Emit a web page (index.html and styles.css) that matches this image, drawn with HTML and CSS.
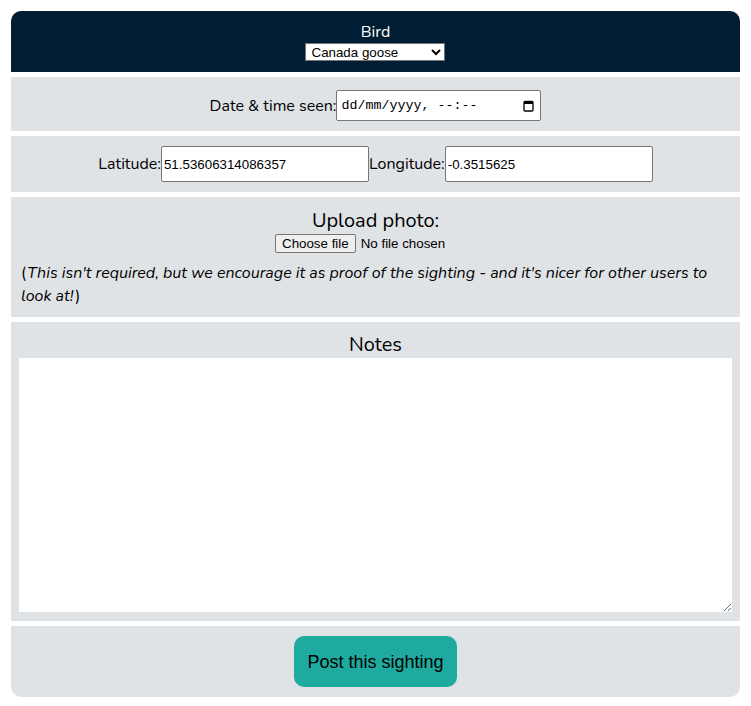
FILE: index.html
```html
<!DOCTYPE html>
<html lang="en">
<head>
<meta charset="utf-8">
<title>New sighting</title>
<link rel="stylesheet" href="styles.css">
</head>
<body>
<form class="sighting-form">
  <div class="section section-header">
    <label class="bird-label" for="bird">Bird</label>
    <select id="bird" class="bird-select">
      <option>Canada goose</option>
    </select>
  </div>
  <div class="section section-row">
    <label for="seen">Date &amp; time seen:</label><span class="fake-date" id="seen"><span class="date-text">dd/mm/yyyy, --:--</span><svg class="cal" width="11" height="12" viewBox="0 0 11 12"><rect x="1" y="1.5" width="9" height="9.5" rx="1" fill="none" stroke="#000" stroke-width="1.3"/><rect x="1" y="1.5" width="9" height="2.5" fill="#000"/></svg></span>
  </div>
  <div class="section section-row section-coords">
    <label for="lat">Latitude:</label><input id="lat" class="text-input" type="text" value="51.53606314086357"><label for="lng">Longitude:</label><input id="lng" class="text-input" type="text" value="-0.3515625">
  </div>
  <div class="section section-upload">
    <div class="big-label">Upload photo:</div>
    <div class="file-row"><span class="file-btn">Choose file</span><span class="file-text">No file chosen</span></div>
    <p class="note"><span class="paren">(</span><em>This isn't required, but we encourage it as proof of the sighting - and it's nicer for other users to look at!</em><span class="paren">)</span></p>
  </div>
  <div class="section section-notes">
    <label class="big-label" for="notes">Notes</label>
    <textarea id="notes" class="notes-area"></textarea>
  </div>
  <div class="section section-submit">
    <button type="button" class="post-btn">Post this sighting</button>
  </div>
</form>
</body>
</html>
```
FILE: styles.css
```css
body {
  margin: 8px;
  background: #ffffff;
  font-family: "Nunito", "Lato", "Noto Sans", sans-serif;
  font-size: 16px;
  color: #000;
}

.sighting-form {
  margin: 3px;
  display: flex;
  flex-direction: column;
  gap: 5px;
  border-radius: 10px;
  overflow: hidden;
}

.section {
  background: #e0e3e6;
}

.section-header {
  background: #001d33;
  color: #ffffff;
  height: 61px;
  display: flex;
  flex-direction: column;
  align-items: center;
  padding-top: 12px;
  box-sizing: border-box;
}

.bird-label {
  font-size: 16px;
  line-height: 19px;
  margin-bottom: 1px;
}

.bird-select {
  width: 140px;
  height: 18px;
  font-family: "Liberation Sans", Arial, sans-serif;
  font-size: 13.33px;
  border: 1px solid #767676;
  border-radius: 0;
  background: #fff;
  padding: 0 0 0 2px;
  margin: 0 2px 0 0;
  color: #000;
}

.section-row {
  display: flex;
  justify-content: center;
  align-items: center;
}

.section-row:nth-child(2) {
  height: 54px;
  padding-top: 3px;
  box-sizing: border-box;
}

.fake-date {
  width: 205px;
  height: 31px;
  box-sizing: border-box;
  border: 1px solid #767676;
  border-radius: 2px;
  background: #fff;
  display: flex;
  align-items: center;
  justify-content: space-between;
  padding: 0 6px 0 4px;
}

.date-text {
  font-family: "Liberation Mono", "DejaVu Sans Mono", monospace;
  font-size: 13.33px;
}

.cal {
  display: block;
}

.section-coords {
  height: 56px;
}

.text-input {
  width: 208px;
  height: 36px;
  box-sizing: border-box;
  border: 1px solid #767676;
  border-radius: 2px;
  font-family: "Liberation Sans", Arial, sans-serif;
  font-size: 13.33px;
  padding: 1px 2px;
  margin: 0;
  background: #fff;
  color: #000;
}

.section-upload {
  height: 120px;
  box-sizing: border-box;
  padding: 12px 10px 0 10px;
  display: flex;
  flex-direction: column;
  align-items: center;
}

.big-label {
  font-size: 20px;
  line-height: 24px;
}

.file-row {
  width: 201px;
  display: flex;
  align-items: center;
  font-family: "Liberation Sans", Arial, sans-serif;
  font-size: 13.33px;
  margin-top: 1px;
}

.file-btn {
  display: inline-block;
  height: 19px;
  line-height: 17px;
  box-sizing: border-box;
  border: 1px solid #767676;
  border-radius: 2px;
  background: #efefef;
  padding: 0 6px;
  margin-right: 5px;
}

.note {
  align-self: stretch;
  margin: 9px 0 0 0;
  line-height: 23px;
}

.note em {
  padding: 0 2px 0 1px;
}

.section-notes {
  height: 299px;
  box-sizing: border-box;
  padding: 11px 8px 9px 8px;
  display: flex;
  flex-direction: column;
  align-items: center;
}

.notes-area {
  align-self: stretch;
  flex: 1;
  margin-top: 1px;
  border: none;
  background: #fff;
  resize: vertical;
  padding: 2px;
}

.section-submit {
  height: 71px;
  box-sizing: border-box;
  padding-top: 10px;
  display: flex;
  justify-content: center;
  align-items: flex-start;
}

.post-btn {
  width: 163px;
  height: 51px;
  border: none;
  border-radius: 10px;
  background: #1eaa9f;
  color: #000;
  font-family: "Liberation Sans", Arial, sans-serif;
  font-size: 18px;
  padding: 1px 0 0 0;
  cursor: pointer;
}
```
